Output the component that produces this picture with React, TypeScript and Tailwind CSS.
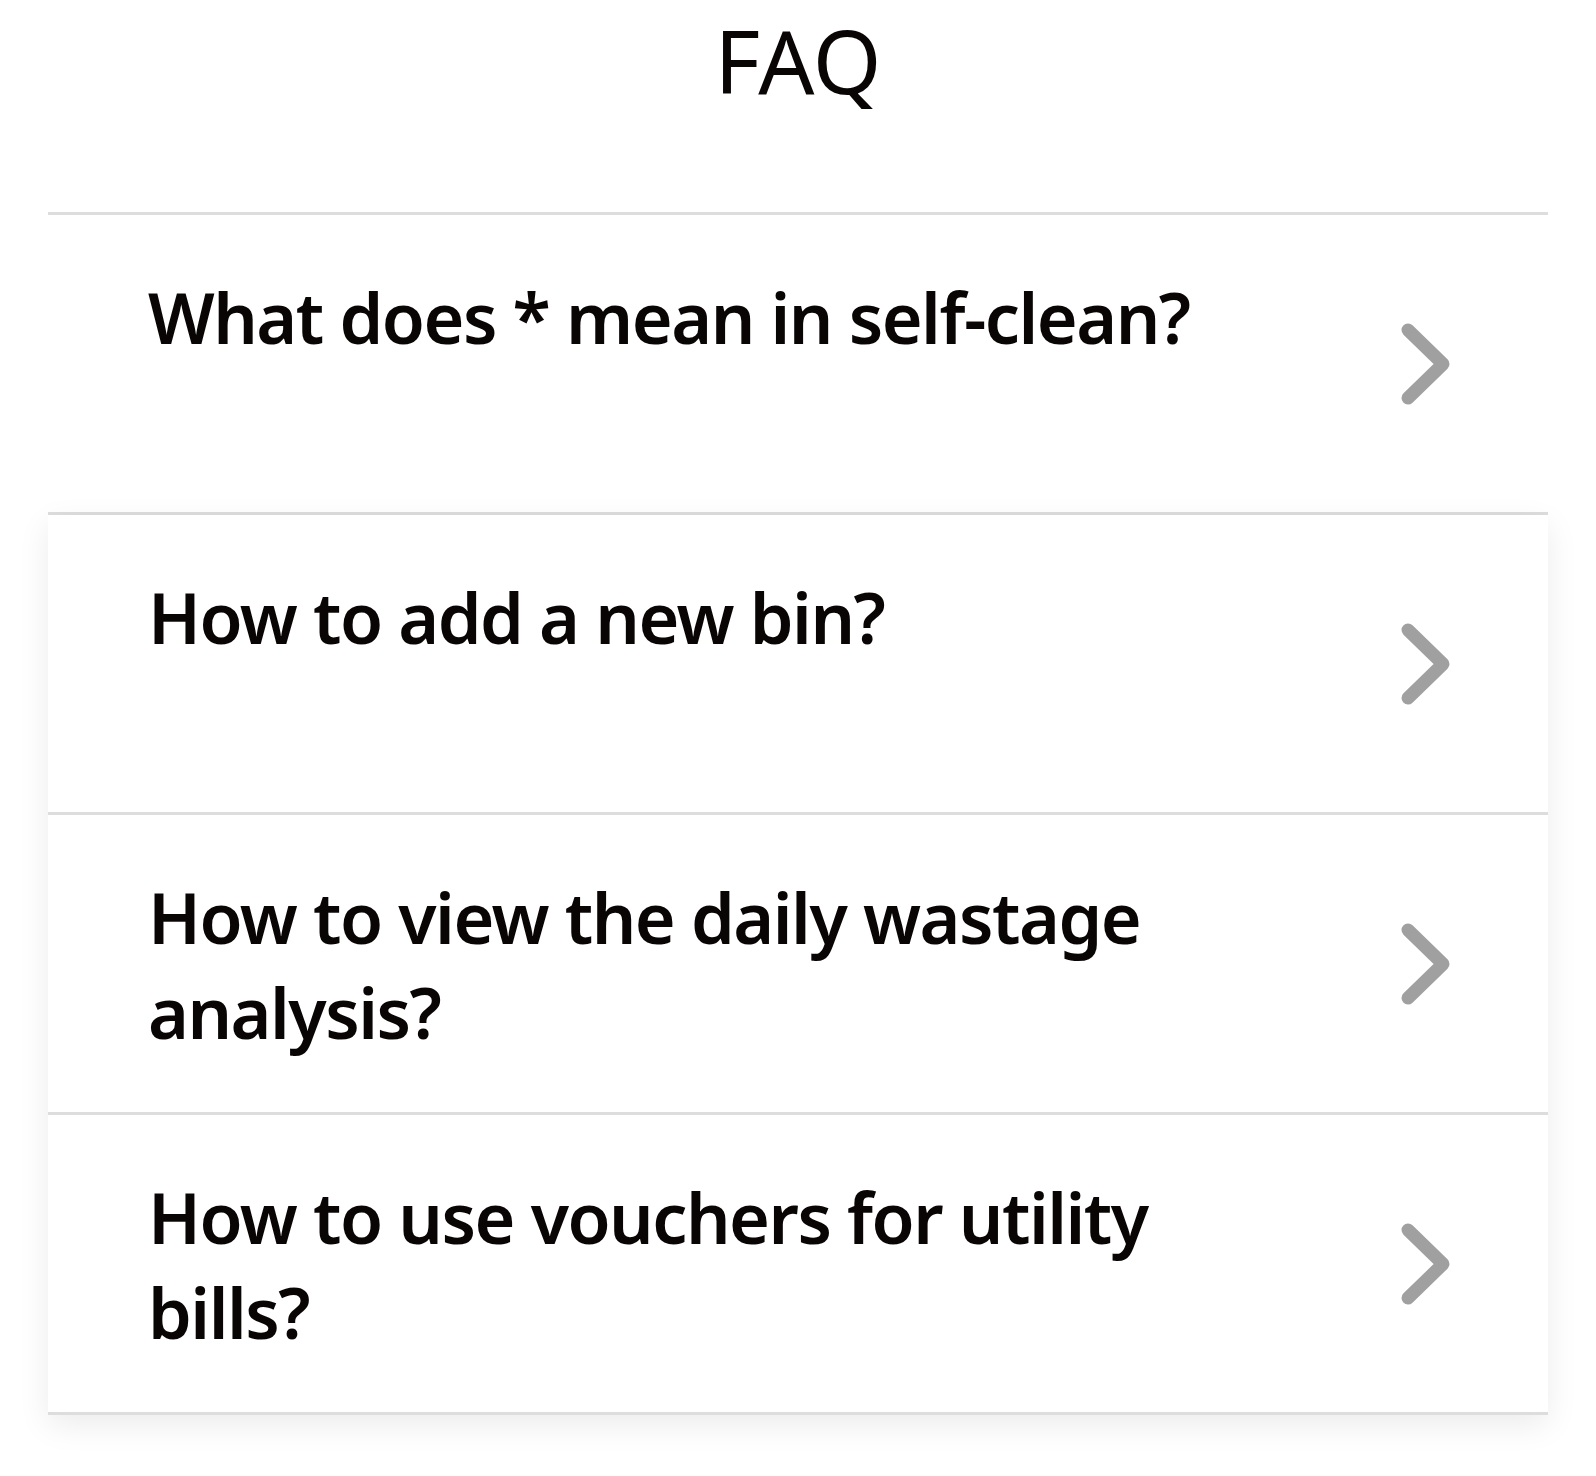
const questions = [
  'What does * mean in self-clean?',
  'How to add a new bin?',
  'How to view the daily wastage analysis?',
  'How to use vouchers for utility bills?',
];

function Chevron() {
  return (
    <svg width="52" height="86" viewBox="0 0 52 86" fill="none" className="shrink-0">
      <path d="M9 9 L44 43 L9 77" stroke="#a0a0a0" strokeWidth="13" strokeLinecap="round" strokeLinejoin="round" />
    </svg>
  );
}

function FaqRow({ text }: { text: string }) {
  return (
    <div className="flex items-center justify-between h-[300px] border-b-[3px] border-[#dddddd] bg-white pl-[100px] pr-[97px]">
      <p className="self-start pt-[55px] w-[1150px] text-[70px] leading-[95px] font-[560] tracking-[-1.5px] text-[#0a0505]">
        {text}
      </p>
      <Chevron />
    </div>
  );
}

export default function App() {
  return (
    <div className="min-h-screen w-full bg-white px-12" style={{ fontFamily: '"Noto Sans", "Open Sans", sans-serif' }}>
      <h1 className="text-center text-[88px] leading-[117px] pt-[2px] mb-[93px] font-normal text-[#0a0505]">FAQ</h1>
      <div className="border-t-[3px] border-[#dddddd]">
        <FaqRow text={questions[0]} />
        <div className="shadow-[0_10px_30px_rgba(0,0,0,0.08)]">
          {questions.slice(1).map((q) => (
            <FaqRow key={q} text={q} />
          ))}
        </div>
      </div>
    </div>
  );
}
